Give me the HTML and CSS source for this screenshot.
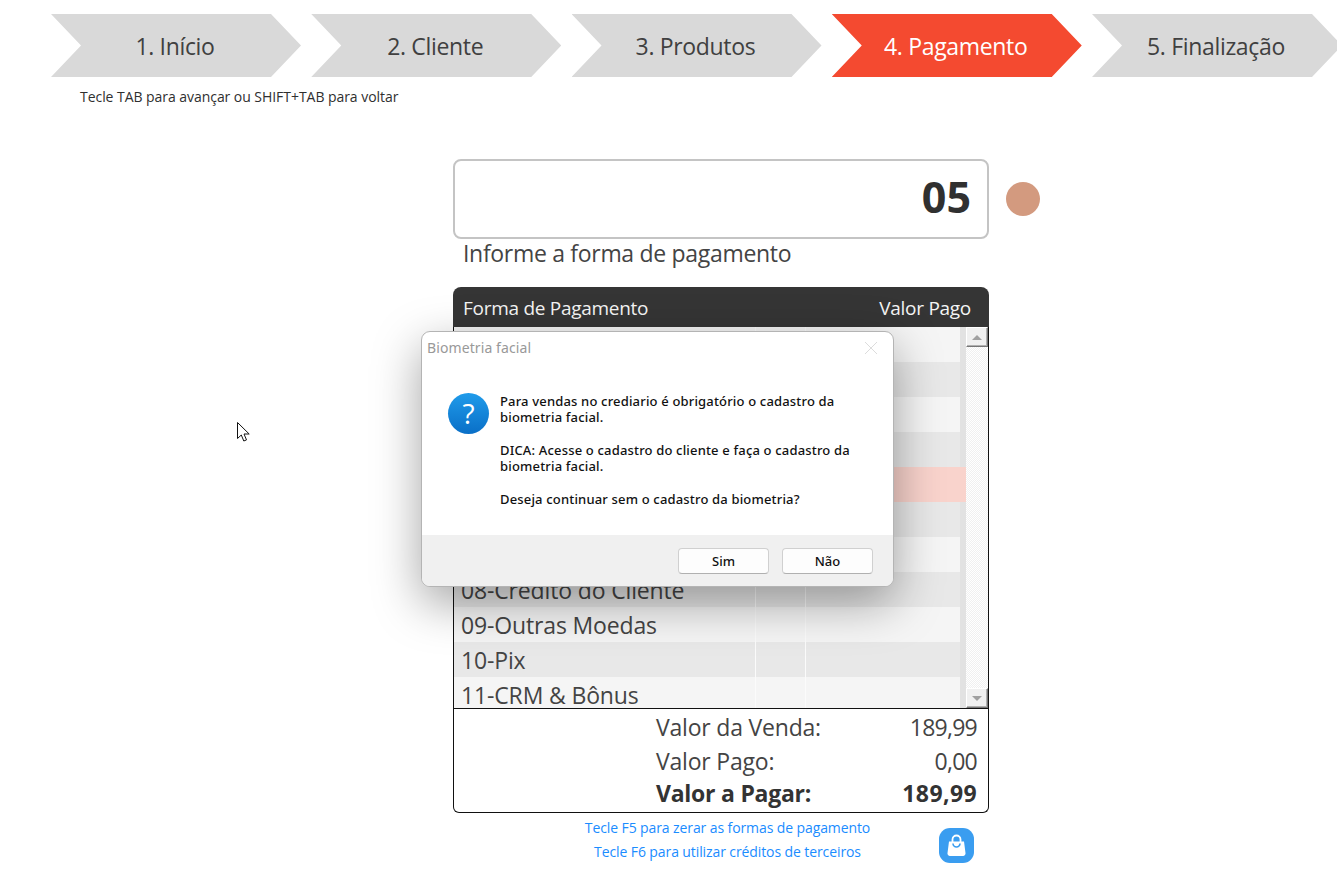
FILE: index.html
```html
<!DOCTYPE html>
<html lang="pt-BR">
<head>
<meta charset="utf-8">
<title>Pagamento</title>
<link rel="stylesheet" href="styles.css">
</head>
<body>
<nav class="steps">
  <div class="step">1. Início</div>
  <div class="step">2. Cliente</div>
  <div class="step">3. Produtos</div>
  <div class="step step-active">4. Pagamento</div>
  <div class="step">5. Finalização</div>
</nav>
<p class="hint">Tecle TAB para avançar ou SHIFT+TAB para voltar</p>
<main class="panel">
  <div class="code-row">
    <div class="code-input">05</div>
    <span class="dot"></span>
  </div>
  <div class="code-label">Informe a forma de pagamento</div>
  <section class="table">
    <header class="table-head"><span>Forma de Pagamento</span><span>Valor Pago</span></header>
    <div class="table-body">
      <div class="rows">
        <div class="row"><span class="c1"></span><span class="c2"></span><span class="c3"></span></div>
        <div class="row"><span class="c1"></span><span class="c2"></span><span class="c3"></span></div>
        <div class="row"><span class="c1"></span><span class="c2"></span><span class="c3"></span></div>
        <div class="row"><span class="c1"></span><span class="c2"></span><span class="c3"></span></div>
        <div class="row row-sel"><span class="c1"></span><span class="c2"></span><span class="c3"></span></div>
        <div class="row"><span class="c1"></span><span class="c2"></span><span class="c3"></span></div>
        <div class="row"><span class="c1"></span><span class="c2"></span><span class="c3"></span></div>
        <div class="row"><span class="c1">08-Crédito do Cliente</span><span class="c2"></span><span class="c3"></span></div>
        <div class="row"><span class="c1">09-Outras Moedas</span><span class="c2"></span><span class="c3"></span></div>
        <div class="row"><span class="c1">10-Pix</span><span class="c2"></span><span class="c3"></span></div>
        <div class="row"><span class="c1">11-CRM &amp; Bônus</span><span class="c2"></span><span class="c3"></span></div>
      </div>
      <div class="scrollbar">
        <span class="sb-btn"><i class="arrow-up"></i></span>
        <span class="sb-track"></span>
        <span class="sb-btn"><i class="arrow-down"></i></span>
      </div>
    </div>
    <div class="totals">
      <div class="total"><span>Valor da Venda:</span><span class="amount">189,99</span></div>
      <div class="total"><span>Valor Pago:</span><span class="amount">0,00</span></div>
      <div class="total total-strong"><span>Valor a Pagar:</span><span class="amount">189,99</span></div>
    </div>
  </section>
  <footer class="foot">
    <div class="foot-links">
      <div>Tecle F5 para zerar as formas de pagamento</div>
      <div>Tecle F6 para utilizar créditos de terceiros</div>
    </div>
    <span class="bag">
      <svg width="23" height="23" viewBox="0 0 23 23"><path class="bag-body" d="M4 7.500h15l1.500 11.500a2.500 2.500 0 0 1-2.500 3H5a2.500 2.500 0 0 1-2.500-3z"/><path class="bag-handle" d="M7.500 8V5.500a4 4 0 0 1 8 0V8"/><path class="bag-smile" d="M8 9.500a3.500 3.500 0 0 0 7 0"/></svg>
    </span>
  </footer>
</main>

<div class="dialog">
  <div class="dialog-title"><span>Biometria facial</span>
    <svg width="14" height="14" viewBox="0 0 14 14"><path class="close-x" d="M1 1l12 12M13 1L1 13"/></svg>
  </div>
  <div class="dialog-body">
    <span class="q-icon">?</span>
    <div class="dialog-text">
      <p>Para vendas no crediario é obrigatório o cadastro da<br>biometria facial.</p>
      <p>DICA: Acesse o cadastro do cliente e faça o cadastro da<br>biometria facial.</p>
      <p>Deseja continuar sem o cadastro da biometria?</p>
    </div>
  </div>
  <div class="dialog-foot">
    <button class="btn">Sim</button>
    <button class="btn">Não</button>
  </div>
</div>

<svg class="cursor" width="13" height="21" viewBox="0 0 13 21"><path class="cursor-path" d="M.5.5v16l3.800-3.500 2.500 6 2.700-1.100-2.500-5.900h5.200z"/></svg>
</body>
</html>
```
FILE: styles.css
```css
* { box-sizing: border-box; }
html, body { margin: 0; height: 886px; overflow: hidden; background: #fff; }
body { font-family: "Open Sans", "Noto Sans", sans-serif; color: #3a3a3a; position: relative; }

.steps { display: flex; gap: 10.25px; padding: 14px 0 0 51px; width: 1400px; }
.step {
  flex: 0 0 250px; height: 63px; display: flex; align-items: center; justify-content: center;
  padding-right: 2px; background: #d9d9d9; font-size: 23px; letter-spacing: -.33px; color: #404040;
  clip-path: polygon(0 0, 220px 0, 100% 50%, 220px 100%, 0 100%, 30px 50%);
}
.step-active { background: #f44a30; color: #fff; }

.hint { margin: 11px 0 0 80px; font-size: 14px; line-height: 18px; letter-spacing: -.05px; color: #2f2f2f; }

.panel { width: 587px; margin: 53px 0 0 453px; }
.code-row { display: flex; align-items: center; gap: 17px; }
.code-input {
  width: 536px; height: 80px; border: 2px solid #c4c4c4; border-radius: 8px;
  display: flex; align-items: center; justify-content: flex-end; padding: 0 16px 5px 0;
  font-size: 43px; font-weight: 700; color: #303030;
}
.dot { width: 34px; height: 34px; border-radius: 50%; background: #d39a7f; }
.code-label { margin: 0 0 0 10px; height: 48px; font-size: 23px; line-height: 29px; letter-spacing: -.31px; color: #444; }

.table { width: 536px; }
.table-head {
  height: 40px; background: #353535; color: #f4f4f4; border-radius: 8px 8px 0 0;
  display: flex; align-items: center; justify-content: space-between; padding: 1px 18px 0 10px;
  font-size: 19px; letter-spacing: -.28px;
}
.table-body { height: 382px; display: flex; border: 1px solid #111; border-top: 0; overflow: hidden; background: #e2e2e2; }
.rows { flex: 0 0 512px; height: 381px; overflow: hidden; }
.row { display: grid; grid-template-columns: 302px 50px 1fr; width: 506px; height: 35px; background: #f5f5f5; }
.row:nth-child(even) { background: #e8e8e8; }
.row span { border-right: 1px solid #fbfbfb; }
.row .c3 { border-right: 0; }
.c1 { font-size: 23px; line-height: 34px; padding: 1px 0 0 7px; white-space: nowrap; letter-spacing: -.15px; color: #444; }
.row-sel, .row-sel:nth-child(even) { background: #f9d3cc; width: 512px; }
.row-sel .c3 { width: 54px; }
.scrollbar { flex: 1; display: flex; flex-direction: column;
  background: repeating-conic-gradient(#fff 0 25%, #f0f0f0 0 50%) 0 0 / 2px 2px; }
.sb-track { flex: 1; }
.sb-btn {
  height: 20px; flex: none; background: #f0f0f0; display: flex; align-items: center; justify-content: center;
  border-top: 1px solid #fff; border-left: 1px solid #fff; border-right: 1px solid #777; border-bottom: 1px solid #777;
  box-shadow: inset -1px -1px 0 #b0b0b0;
}
.arrow-up, .arrow-down { width: 0; height: 0; border-left: 5px solid transparent; border-right: 5px solid transparent; }
.arrow-up { border-bottom: 5px solid #a0a0a0; }
.arrow-down { border-top: 5px solid #a0a0a0; }

.totals { height: 104px; border: 1px solid #111; border-top: 0; border-radius: 0 0 6px 6px; padding: 2px 11px 0 202px; }
.total { display: flex; justify-content: space-between; height: 33.500px; font-size: 23px; line-height: 33px; letter-spacing: -.2px; color: #444; }
.amount { letter-spacing: -.75px; }
.total-strong { font-weight: 700; color: #333; height: 30px; line-height: 30px; letter-spacing: -.25px; }
.total-strong .amount { letter-spacing: .4px; }

.foot { display: flex; width: 536px; height: 50px; margin-top: 3px; }
.foot-links { width: 427px; margin-left: 61px; text-align: center; font-size: 14px; line-height: 24px; letter-spacing: -.1px; color: #1a8cff; }
.bag { width: 35px; height: 35px; border-radius: 11px; background: #3a9df0; margin: 12px 0 0 -2px; flex: none; display: flex; align-items: center; justify-content: center; }
.bag-body { fill: #fff; }
.bag-handle { fill: none; stroke: #fff; stroke-width: 1.800; }
.bag-smile { fill: none; stroke: #3a9df0; stroke-width: 1.600; }

.dialog {
  position: absolute; left: 421px; top: 331px; width: 473px; height: 256px; z-index: 10;
  background: #fff; border: 1px solid #b4b4b4; border-radius: 9px;
  box-shadow: 0 16px 48px rgba(0,0,0,.36);
  display: flex; flex-direction: column;
  font-family: "Noto Sans", "Open Sans", sans-serif; color: #111;
}
.dialog-title { height: 31px; display: flex; align-items: center; justify-content: space-between; padding: 0 15px 0 5px; font-size: 14px; letter-spacing: .1px; color: #999; flex: none; }
.close-x { stroke: #dcdcdc; stroke-width: 1; fill: none; }
.dialog-body { flex: 1; display: flex; gap: 11px; padding: 30px 0 0 26px; }
.q-icon {
  width: 41px; height: 41px; border-radius: 50%; flex: none;
  background: linear-gradient(#1f9bea, #0a6fc7); color: #fff; font-size: 28px; line-height: 41px; text-align: center;
  font-family: "Open Sans", sans-serif;
}
.dialog-text { font-size: 13px; font-weight: 500; line-height: 16.300px; letter-spacing: .17px; }
.dialog-text p { margin: 0 0 16.500px; }
.dialog-foot { height: 51px; flex: none; background: #f0f0f0; border-radius: 0 0 8px 8px; display: flex; justify-content: flex-end; gap: 13px; padding: 13px 20px 0 0; }
.btn {
  width: 91px; height: 26px; background: #fdfdfd; border: 1px solid #d0d0d0; border-bottom-color: #b0b0b0; border-radius: 4px;
  font-family: inherit; font-size: 13px; font-weight: 500; color: #111; padding: 0;
}
.cursor { position: absolute; left: 237px; top: 422px; }
.cursor-path { fill: #fff; stroke: #111; stroke-width: 1; }
```
